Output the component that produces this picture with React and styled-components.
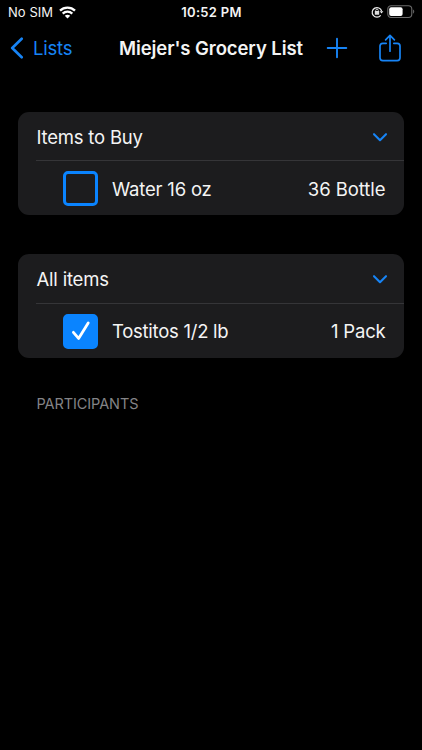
import React, { useState } from "react"
import styled, { createGlobalStyle } from "styled-components"

const sections = [
    {
        title: "Items to Buy",
        items: [{ id: 1, name: "Water 16 oz", amount: "36 Bottle", bought: false, nameSpacing: -0.2, amountSpacing: -0.06 }]
    },
    {
        title: "All items",
        items: [{ id: 2, name: "Tostitos 1/2 lb", amount: "1 Pack", bought: true, nameSpacing: -0.26, amountSpacing: -0.2 }]
    }
]

export default function App() {
    return (
        <>
            <GlobalStyle />
            <Screen>
                <StatusBar />
                <NavBar />
                <Content>
                    {sections.map((section) => <Section key={section.title} {...section} />)}
                    <SectionLabel>PARTICIPANTS</SectionLabel>
                </Content>
            </Screen>
        </>
    )
}

function StatusBar() {
    return (
        <StatusContainer>
            <Carrier>
                <StatusText $spacing={0.05}>No SIM</StatusText>
                <svg width="17" height="13" viewBox="0 0 17 13" fill="none" stroke="#fff" strokeWidth="2.3">
                    <path d="M1 4.6C5.1 0.5 11.9 0.5 16 4.6" />
                    <path d="M3.7 7.6C6.4 4.9 10.6 4.9 13.3 7.6" />
                    <path d="M8.5 12.4L5.8 9.7C7.3 8.3 9.7 8.3 11.2 9.7Z" fill="#fff" stroke="none" />
                </svg>
            </Carrier>
            <StatusText $spacing={0.3} $bold>10:52 PM</StatusText>
            <Indicators>
                <svg width="13" height="12" viewBox="0 0 13 12" fill="none" stroke="#eee">
                    <path d="M9.7 9.4A4.8 4.8 0 1 1 10.6 5" strokeWidth="1.2" />
                    <path d="M8.6 5.2H12.4L10.5 7.6Z" fill="#eee" stroke="none" />
                    <rect x="3.8" y="5.1" width="4.4" height="3.6" rx="0.5" fill="#ddd" stroke="none" />
                    <path d="M4.7 5.4V4.5A1.3 1.3 0 0 1 7.3 4.5V5.4" strokeWidth="0.8" />
                </svg>
                <svg width="28" height="14" viewBox="0 0 28 14" fill="none">
                    <rect x="0.8" y="0.7" width="24" height="11.8" rx="3.4" stroke="#6c6c6c" strokeWidth="1.1" />
                    <rect x="2.2" y="2.2" width="13.4" height="8.8" rx="2" fill="#fff" />
                    <path d="M26.1 4.6C27.6 5.1 27.6 8.2 26.1 8.7Z" fill="#6c6c6c" />
                </svg>
            </Indicators>
        </StatusContainer>
    )
}

function NavBar() {
    return (
        <NavContainer>
            <BackButton>
                <svg width="14" height="22" viewBox="0 0 14 22" fill="none" stroke="#1784f5" strokeWidth="2.6" strokeLinecap="round" strokeLinejoin="round">
                    <path d="M11.7 1.7L2.2 11L11.7 20.3" />
                </svg>
                Lists
            </BackButton>
            <NavTitle>Miejer's Grocery List</NavTitle>
            <NavActions>
                <IconButton aria-label="Add">
                    <svg width="22" height="22" viewBox="0 0 22 22" fill="none" stroke="#1784f5" strokeWidth="1.9" strokeLinecap="round">
                        <path d="M11 1.7V20.3M1.7 11H20.3" />
                    </svg>
                </IconButton>
                <IconButton aria-label="Share">
                    <svg width="24" height="28" viewBox="0 0 24 28" fill="none" stroke="#1784f5" strokeWidth="1.7" strokeLinecap="round" strokeLinejoin="round">
                        <path d="M8.2 9.3H4.8Q2 9.3 2 12.1V23.8Q2 26.6 4.8 26.6H19.2Q22 26.6 22 23.8V12.1Q22 9.3 19.2 9.3H15.8" />
                        <path d="M12 17.2V1.6M7.6 5.8L12 1.4L16.4 5.8" />
                    </svg>
                </IconButton>
            </NavActions>
        </NavContainer>
    )
}

function Section({ title, items }) {
    const [open, setOpen] = useState(true)

    return (
        <Card>
            <CardHeader onClick={() => setOpen(!open)}>
                {title}
                <Chevron $open={open} width="16" height="10" viewBox="0 0 16 10" fill="none" stroke="#1784f5" strokeWidth="2.1" strokeLinecap="round" strokeLinejoin="round">
                    <path d="M2 2.2L8 8.2L14 2.2" />
                </Chevron>
            </CardHeader>
            {open && items.map((item) => <Item key={item.id} {...item} />)}
        </Card>
    )
}

function Item({ name, amount, bought, nameSpacing, amountSpacing }) {
    const [checked, setChecked] = useState(bought)

    return (
        <ItemRow>
            <Checkbox role="checkbox" aria-checked={checked} $checked={checked} onClick={() => setChecked(!checked)}>
                {checked && (
                    <svg width="20" height="20" viewBox="0 0 20 20" fill="none" stroke="#fff" strokeWidth="2.8" strokeLinecap="round" strokeLinejoin="round">
                        <path d="M2.4 11.3L7.6 17.4L17.2 2" />
                    </svg>
                )}
            </Checkbox>
            <ItemText $spacing={nameSpacing}>{name}</ItemText>
            <ItemText $spacing={amountSpacing}>{amount}</ItemText>
        </ItemRow>
    )
}

const GlobalStyle = createGlobalStyle`
    * {
        box-sizing: border-box;
    }
    body {
        margin: 0;
        background: #000;
    }
    button {
        border: none;
        background: none;
        padding: 0;
        font: inherit;
        letter-spacing: inherit;
    }
    svg {
        display: block;
        flex-shrink: 0;
    }
`
const Screen = styled.div`
    height: 750px;
    background: #000;
    color: #f4f4f4;
    font-family: Inter, "Liberation Sans", sans-serif;
    font-size: 18.5px;
    letter-spacing: -0.2px;
    white-space: nowrap;
    overflow: hidden;
`
const StatusContainer = styled.div`
    height: 24px;
    padding: 0 7px 0 8px;
    display: grid;
    grid-template-columns: 1fr auto 1fr;
    align-items: center;
`
const Carrier = styled.div`
    display: flex;
    align-items: center;
    gap: 5.5px;
`
const StatusText = styled.span`
    font-size: 13px;
    font-weight: ${({ $bold }) => ($bold ? 600 : 400)};
    letter-spacing: ${({ $spacing }) => $spacing}px;
`
const Indicators = styled.div`
    display: flex;
    align-items: center;
    justify-content: flex-end;
    gap: 3.5px;
`
const NavContainer = styled.div`
    height: 47.5px;
    padding: 0 20px 0 10px;
    display: grid;
    grid-template-columns: 109px 1fr auto;
    align-items: center;
`
const BackButton = styled.button`
    display: flex;
    align-items: center;
    gap: 9px;
    color: #1784f5;
`
const NavTitle = styled.h1`
    margin: 0;
    font-size: 18.5px;
    font-weight: 600;
    letter-spacing: -0.08px;
`
const NavActions = styled.div`
    display: flex;
    align-items: center;
    gap: 30px;
`
const IconButton = styled.button`
    color: #1784f5;
`
const Content = styled.div`
    padding: 40px 18px 0;
    display: flex;
    flex-direction: column;
    gap: 39.2px;
`
const Card = styled.section`
    background: #1c1c1e;
    border-radius: 11px;
    padding-left: 18px;
`
const CardHeader = styled.div`
    height: 48.8px;
    padding: 1.4px 16px 0 0.5px;
    display: flex;
    align-items: center;
    justify-content: space-between;
`
const Chevron = styled.svg`
    transform: ${({ $open }) => ($open ? "none" : "rotate(-90deg)")};
`
const ItemRow = styled.div`
    height: 54.7px;
    border-top: 1px solid #353538;
    padding: 0.9px 18.5px 0 27px;
    display: grid;
    grid-template-columns: 35px 1fr auto;
    column-gap: 14px;
    align-items: center;
`
const Checkbox = styled.button`
    width: 35px;
    height: 35px;
    display: flex;
    align-items: center;
    justify-content: center;
    border: 3px solid #0a84ff;
    border-radius: 5px;
    background: ${({ $checked }) => ($checked ? "#0a84ff" : "transparent")};
`
const ItemText = styled.span`
    letter-spacing: ${({ $spacing }) => $spacing}px;
`
const SectionLabel = styled.h2`
    margin: -1.6px 0 0 18.5px;
    color: #848487;
    font-size: 14.5px;
    font-weight: 400;
    letter-spacing: -0.1px;
`
